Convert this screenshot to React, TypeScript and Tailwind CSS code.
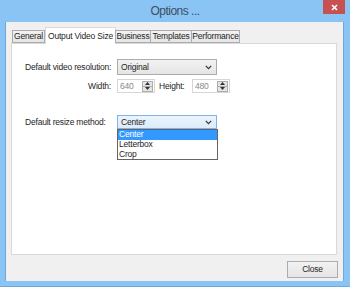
import React from 'react';

const font = { fontFamily: '"Liberation Sans", Arial, sans-serif' };

function Chevron() {
  return (
    <svg width="7" height="5" viewBox="0 0 7 5" className="text-[#333]">
      <path d="M0.8 0.8 L3.5 3.6 L6.2 0.8" fill="none" stroke="currentColor" strokeWidth="1.2" />
    </svg>
  );
}

function Spinner() {
  return (
    <div className="flex flex-col w-[11px] h-[11px] border border-[#adadad] bg-[#e5e5e5]">
      <div className="flex-1 flex items-center justify-center border-b border-[#adadad]">
        <svg width="5" height="3" viewBox="0 0 5 3"><path d="M0 3 L2.5 0 L5 3 Z" fill="#333" /></svg>
      </div>
      <div className="flex-1 flex items-center justify-center">
        <svg width="5" height="3" viewBox="0 0 5 3"><path d="M0 0 L2.5 3 L5 0 Z" fill="#333" /></svg>
      </div>
    </div>
  );
}

function NumberBox({ value }: { value: string }) {
  return (
    <div className="flex items-center justify-between w-[38px] h-[14px] border border-[#d6d6d6] bg-white pl-[2px] pr-[1px]">
      <span className="text-[#8a8a8a]">{value}</span>
      <Spinner />
    </div>
  );
}

export default function App() {
  const tabs = [
    { name: 'General', w: 'w-[33px]' },
    { name: 'Output Video Size', w: 'w-[71px]', active: true },
    { name: 'Business', w: 'w-[36px]' },
    { name: 'Templates', w: 'w-[42px]' },
    { name: 'Performance', w: 'w-[49px]' },
  ];

  return (
    <div className="w-[350px] h-[287px] bg-[#8ac4f4] flex flex-col text-[8.5px] tracking-[-0.2px] whitespace-nowrap text-[#1e1e1e] border-b border-[#6ea7da]" style={font}>
      {/* Title bar */}
      <div className="relative h-[22px] flex items-center justify-center">
        <span className="text-[12px] tracking-[-0.5px] text-[#3b4e63]">Options ...</span>
        <div className="absolute right-[5px] top-0 w-[22px] h-[14px] bg-[#c75050] flex items-center justify-center">
          <svg width="7" height="7" viewBox="0 0 7 7">
            <path d="M1 1 L6 6 M6 1 L1 6" stroke="white" strokeWidth="1.6" />
          </svg>
        </div>
      </div>

      {/* Client area */}
      <div className="flex-1 mx-[5px] mb-[5px] mr-[6px] bg-[#f0f0f0] flex flex-col border-l border-[#6ea7da] border-r">
        {/* Tabs */}
        <div className="flex items-end pl-[6px] pt-[4px] h-[21px] relative z-10">
          {tabs.map((t) =>
            t.active ? (
              <div key={t.name} className={`${t.w} h-[17px] bg-white border border-b-0 border-[#d9d9d9] flex items-start justify-center pt-[2px] -mb-px`}>
                {t.name}
              </div>
            ) : (
              <div key={t.name} className={`${t.w} h-[13px] bg-gradient-to-b from-[#f2f2f2] to-[#e5e5e5] border border-[#acacac] -ml-px first:ml-0 flex items-center justify-center`}>
                {t.name}
              </div>
            )
          )}
        </div>

        {/* Panel */}
        <div className="mx-[5px] mr-[6px] h-[212px] bg-white border border-[#d9d9d9] relative pl-[13px] pt-[15px]">
          <div className="flex items-center h-[16px]">
            <span className="w-[92px]">Default video resolution:</span>
            <div className="w-[100px] h-[16px] border border-[#acacac] bg-gradient-to-b from-[#f2f2f2] to-[#e5e5e5] flex items-center justify-between pl-[3px] pr-[4px]">
              <span>Original</span>
              <Chevron />
            </div>
          </div>
          <div className="flex items-center h-[14px] mt-[4px]">
            <span className="w-[92px] text-right pr-[6px]">Width:</span>
            <NumberBox value="640" />
            <span className="ml-[4px] w-[33px]">Height:</span>
            <NumberBox value="480" />
          </div>
          <div className="flex items-center h-[14px] mt-[22px]">
            <span className="w-[92px]">Default resize method:</span>
            <div className="relative w-[100px] h-[14px] border border-[#7eb4ea] bg-gradient-to-b from-[#ecf4fc] to-[#dcecfc] flex items-center justify-between pl-[3px] pr-[4px]">
              <span>Center</span>
              <Chevron />
              <div className="absolute left-[-1px] top-[13px] w-[101px] bg-white border border-[#646464] flex flex-col leading-[9.5px]">
                <div className="bg-[#3399ff] text-white pl-[1px] h-[10px]">Center</div>
                <div className="pl-[1px] h-[10px]">Letterbox</div>
                <div className="pl-[1px] h-[9px]">Crop</div>
              </div>
            </div>
          </div>
        </div>

        {/* Footer */}
        <div className="flex justify-end mr-[5px] mt-[6px]">
          <div className="w-[51px] h-[17px] border border-[#acacac] bg-gradient-to-b from-[#f2f2f2] to-[#e5e5e5] flex items-center justify-center">
            Close
          </div>
        </div>
      </div>
    </div>
  );
}
